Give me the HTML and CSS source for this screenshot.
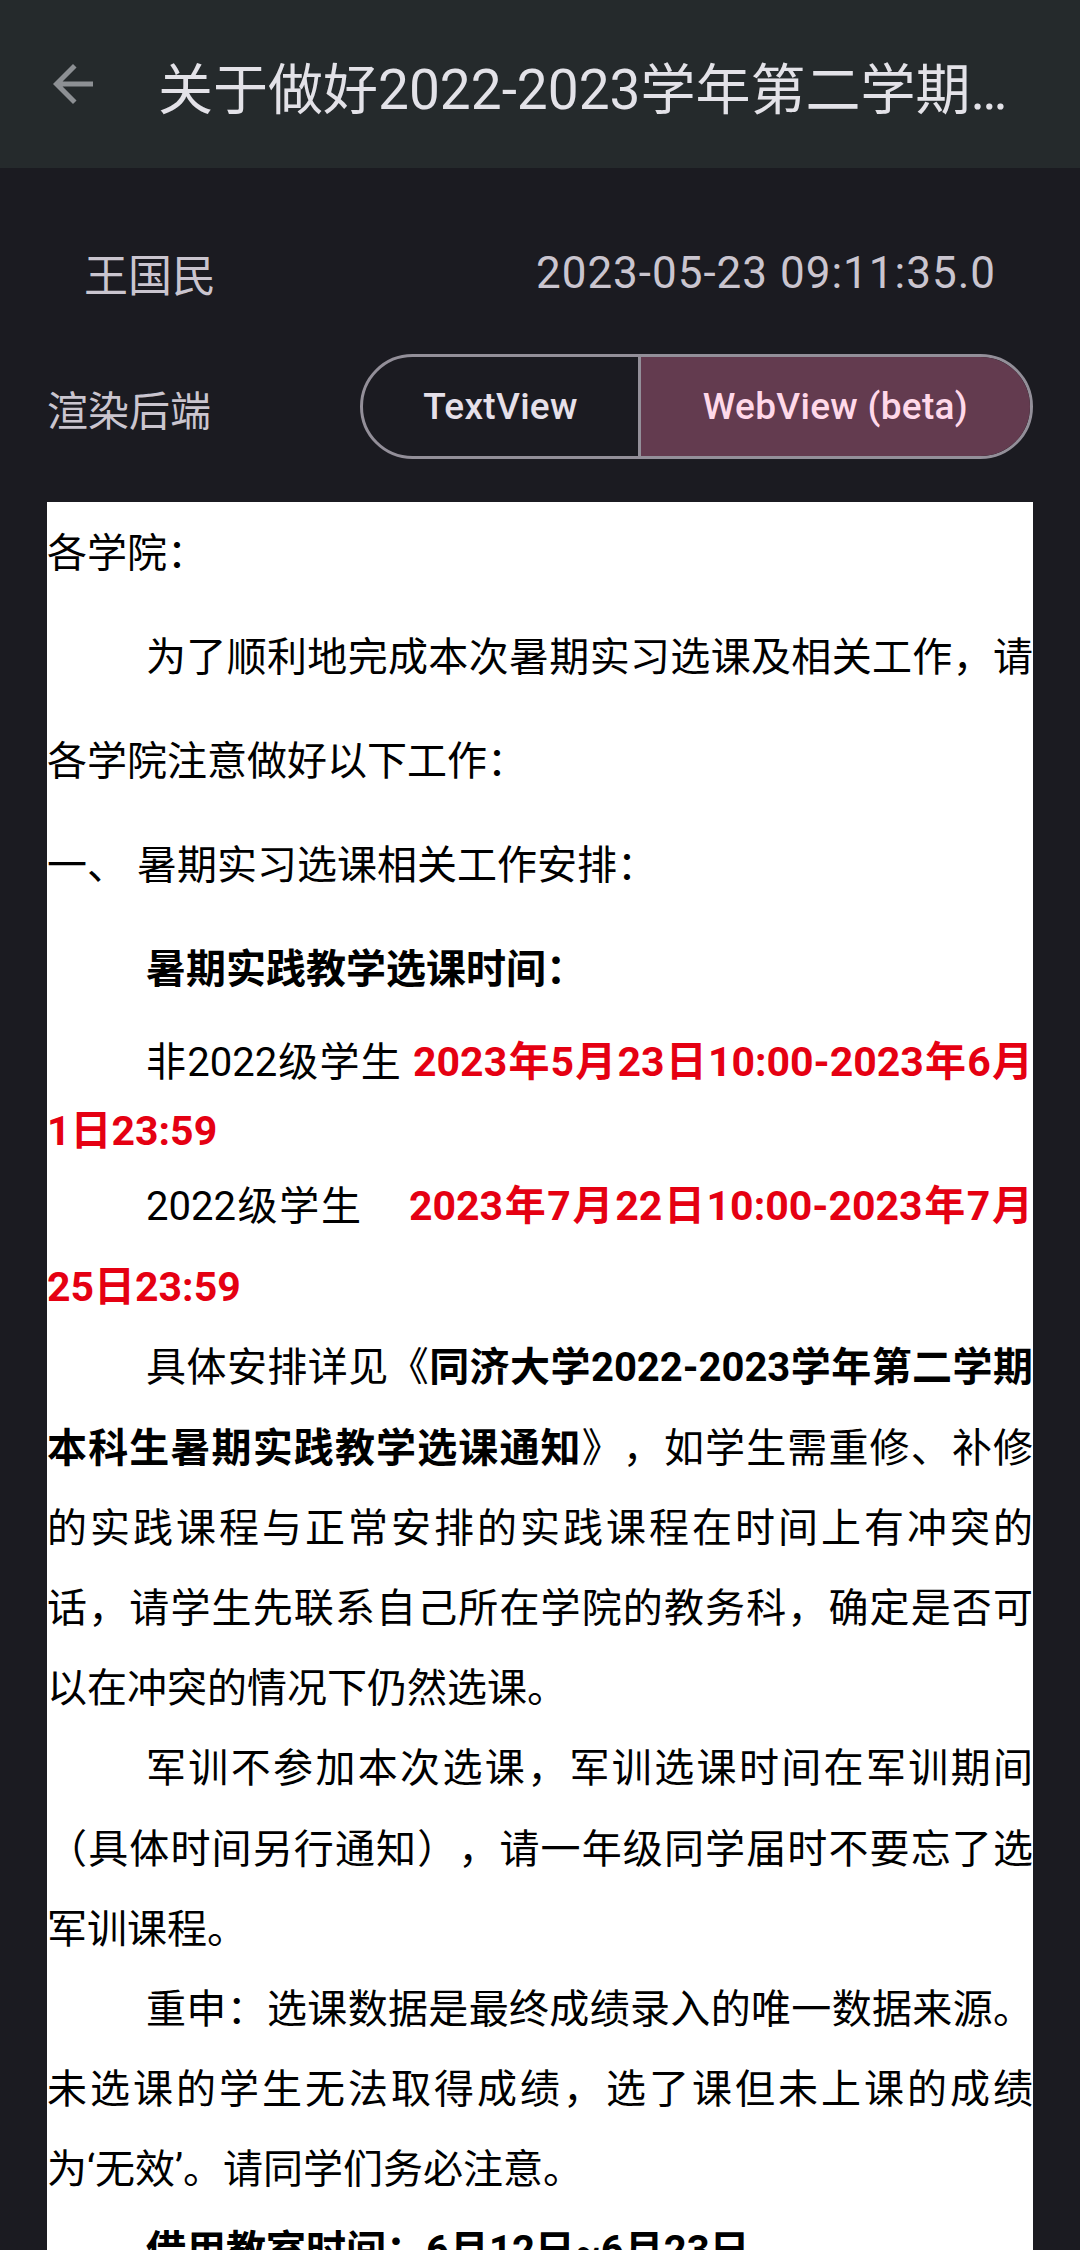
FILE: index.html
```html
<!DOCTYPE html>
<html lang="zh-CN">
<head>
<meta charset="utf-8">
<title>通知详情</title>
<link rel="stylesheet" href="styles.css">
</head>
<body>
<header class="topbar">
  <button class="back" aria-label="返回">
    <svg viewBox="0 0 24 24" width="60" height="60"><path d="M20 11H7.83l5.59-5.59L12 4l-8 8 8 8 1.41-1.41L7.83 13H20v-2z"/></svg>
  </button>
  <h1 class="title">关于做好2022-2023学年第二学期本科生暑期实践教学选课工作的通知</h1>
</header>
<main class="page">
  <div class="meta">
    <span class="author">王国民</span>
    <span class="date">2023-05-23 09:11:35.0</span>
  </div>
  <div class="render-row">
    <span class="render-label">渲染后端</span>
    <div class="segmented">
      <button class="seg">TextView</button>
      <button class="seg seg-active">WebView (beta)</button>
    </div>
  </div>
  <article class="doc">
    <p class="l104">各学院：</p>
    <p class="l104 ind">为了顺利地完成本次暑期实习选课及相关工作，请各学院注意做好以下工作：</p>
    <p class="l104">一、 暑期实习选课相关工作安排：</p>
    <p class="l104 ind"><b>暑期实践教学选课时间：</b></p>
    <p class="l68 ind">非2022级学生 <b class="red">2023年5月23日10:00-2023年6月1日23:59</b></p>
    <p class="l80 ind">2022级学生&nbsp;&nbsp;&nbsp; <b class="red">2023年7月22日10:00-2023年7月25日23:59</b></p>
    <p class="l80 ind">具体安排详见《<b>同济大学2022-2023学年第二学期本科生暑期实践教学选课通知</b>》，如学生需重修、补修的实践课程与正常安排的实践课程在时间上有冲突的话，请学生先联系自己所在学院的教务科，确定是否可以在冲突的情况下仍然选课。</p>
    <p class="l80 ind">军训不参加本次选课，军训选课时间在军训期间（具体时间另行通知），请一年级同学届时不要忘了选军训课程。</p>
    <p class="l80 ind">重申：选课数据是最终成绩录入的唯一数据来源。未选课的学生无法取得成绩，选了课但未上课的成绩为‘无效’。请同学们务必注意。</p>
    <p class="l80 ind"><b>借用教室时间：6月12日~6月23日</b></p>
    <p class="l80 ind">各学院如需借用教室，请按规定提前申请。</p>
  </article>
</main>
</body>
</html>
```

FILE: styles.css
```css
* {
  box-sizing: border-box;
  margin: 0;
  padding: 0;
}

html,
body {
  background: #1b1b21;
}

body {
  width: 1080px;
  height: 2250px;
  overflow: hidden;
  font-family: Roboto, "Noto Sans CJK SC", sans-serif;
}

.topbar {
  height: 168px;
  background: #252a2c;
  display: flex;
  align-items: center;
  padding: 0 44px 0 43px;
}

.back {
  width: 60px;
  height: 60px;
  flex: none;
  display: flex;
  background: none;
  border: 0;
}

.back svg {
  display: block;
  fill: #8d9094;
}

.title {
  flex: 1;
  min-width: 0;
  margin-left: 55px;
  margin-top: 12px;
  font-size: 55px;
  font-weight: 400;
  line-height: 66px;
  color: #e3e2e8;
  white-space: nowrap;
  overflow: hidden;
  text-overflow: ellipsis;
}

.page {
  padding: 79px 47px 0;
}

.meta {
  display: flex;
  justify-content: space-between;
  align-items: flex-start;
  padding: 0 37px;
  height: 56px;
}

.author {
  font-size: 44px;
  line-height: 52px;
  padding-top: 4px;
  color: #cac5cf;
}

.date {
  font-size: 44px;
  line-height: 52px;
  letter-spacing: 1px;
  color: #cac5cf;
}

.render-row {
  display: flex;
  justify-content: space-between;
  align-items: center;
  margin-top: 51px;
}

.render-label {
  font-size: 41px;
  line-height: 50px;
  padding-top: 10px;
  color: #cac5cf;
}

.segmented {
  display: flex;
  height: 105px;
  border: 3px solid #938f99;
  border-radius: 53px;
  overflow: hidden;
}

.seg {
  padding: 0 60px;
  font-family: Roboto, sans-serif;
  font-size: 37px;
  font-weight: 500;
  letter-spacing: 0.3px;
  line-height: 1;
  color: #e6e0e9;
  background: transparent;
  border: 0;
}

.seg + .seg {
  border-left: 3px solid #938f99;
}

.seg-active {
  padding: 0 62px;
  background: #633b4f;
  color: #ffd8e9;
}

.doc {
  margin-top: 43px;
  min-height: 1800px;
  background: #fff;
  color: #000;
  font-size: 40px;
  text-align: justify;
  text-spacing-trim: space-all;
}

.ind {
  text-indent: 99px;
}

.l104 {
  line-height: 104px;
}

.l68 {
  line-height: 68px;
  margin-top: 6px;
}

.l80 {
  line-height: 80.2px;
}

b {
  font-weight: 700;
}

.red {
  color: #e50012;
  font-size: 41px;
}
```
